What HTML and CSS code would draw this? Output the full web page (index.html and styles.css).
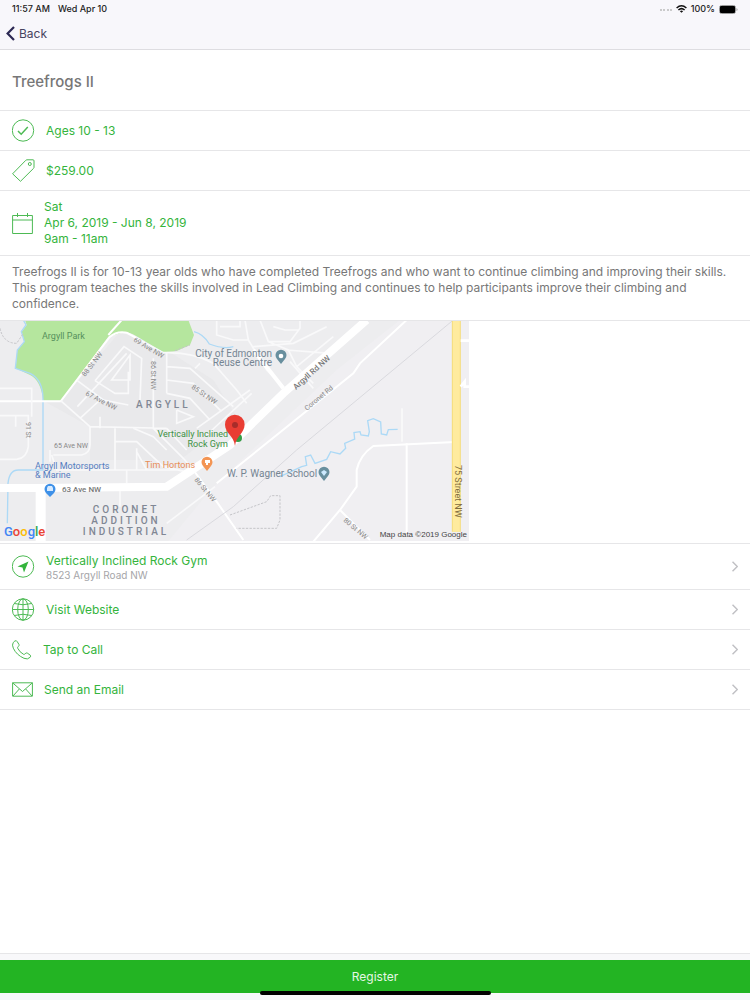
FILE: index.html
```html
<!DOCTYPE html>
<html lang="en">
<head>
    <meta charset="UTF-8">
    <meta name="viewport" content="width=device-width, initial-scale=1.0">
    <title>Treefrogs II</title>
    <link rel="stylesheet" href="styles.css">
</head>
<body>
    <header>
        <div class="status">
            <span>11:57 AM</span>
            <span>Wed Apr 10</span>
            <div class="status-right">
                <svg width="12" height="4" viewBox="0 0 12 4" fill="#bbb"><circle cx="1" cy="3" r="1"/><circle cx="4" cy="3" r="1"/><circle cx="8" cy="3" r="1"/><circle cx="11" cy="3" r="1"/></svg>
                <svg width="11" height="8" viewBox="0 0 11 8" fill="none" stroke="#111" stroke-width="1.5"><path d="M.6 3Q5.500-1.400 10.400 3M2.400 5Q5.500 2.200 8.600 5"/><path d="M5.500 7.800L3.900 6.200Q5.500 5 7.100 6.200Z" fill="#111" stroke="none"/></svg>
                <span>100%</span>
                <svg width="19" height="9" viewBox="0 0 19 9"><rect x=".5" y=".5" width="16" height="8" rx="2" fill="none" stroke="#999"/><rect x="1" y="1" width="15" height="7" rx="1" fill="#000"/><path d="M17.500 3v3q1-.5 1-1.500t-1-1.500z" fill="#999"/></svg>
            </div>
        </div>
        <button class="back" type="button">
            <svg width="9" height="15" viewBox="0 0 9 15" fill="none" stroke="#2c2853" stroke-width="2.200"><path d="M8 1L1.600 7.500L8 14"/></svg>
            Back
        </button>
    </header>

    <main>
        <h1>Treefrogs II</h1>
        <div class="row">
            <svg class="icon" width="23" height="23" viewBox="0 0 23 23"><circle cx="11" cy="11.500" r="10.700"/><path d="M6 12l3.200 3.200L15.800 8" stroke-width="1.500"/></svg>
            <span>Ages 10 - 13</span>
        </div>
        <div class="row">
            <svg class="icon" width="23" height="23" viewBox="0 0 23 23"><path d="M.6 14.800L13.800 1.300Q14.300.8 15 .8h6q1 0 1 1v6.500q0 .6-.5 1.100L8.500 22.300Z"/><circle cx="17.800" cy="5" r="1.500"/></svg>
            <span>$259.00</span>
        </div>
        <div class="row dates">
            <svg class="icon" width="21" height="23" viewBox="0 0 21 23"><path d="M.6 3.500h19.800v18H.6zM.6 8h19.800M5.500 1v4M15.500 1v4"/></svg>
            <span>Sat<br>Apr 6, 2019 - Jun 8, 2019<br>9am - 11am</span>
        </div>
        <p class="description">Treefrogs II is for 10-13 year olds who have completed Treefrogs and who want to continue climbing and improving their skills. This program teaches the skills involved in Lead Climbing and continues to help participants improve their climbing and confidence.</p>

        <div class="map">
            <svg width="469" height="220" viewBox="0 1 469 220">
                <!-- land, water and roads, drawn at three times the map size -->
                <g transform="scale(.33333)" fill="none">
                    <rect width="1410" height="670" fill="#ededef"/>
                    <path d="M500 670L640 500L1010 150L1200 0H1410V670Z" fill="#f0eff2"/>
                    <path d="M130 242L270 320V420H540L710 290L640 180L500 90L360 35L185 240Z" fill="#e9e9eb"/>
                    <path d="M75 0L80 15L65 35L73 65L52 90L47 145L90 165Q122 180 130 242H182L325 50L375 35Q400 40 420 55L490 97L530 93L570 75L582 45L565 0Z" fill="#b5e69e"/>
                    <path d="M70 0L78 15L64 35L73 65L52 90L46 145L90 160Q130 180 129 240V450H55Q28 450 24 490L22 610M582 35Q610 42 628 72Q670 88 700 80M840 470L905 440L920 436L916 410L932 405L945 430L980 418L992 395L1020 402L1037 385L1034 370L1064 357L1062 338L1080 335L1083 345L1105 348L1108 335L1103 302L1120 296L1142 306L1144 342L1160 345L1165 329L1193 328" stroke="#acd9f6" stroke-width="4"/>
                    <g stroke="#f9f9fa" stroke-width="5">
                        <path d="M0 244H182L328 52Q350 32 380 38L420 60M325 45L365 0" stroke="#fff" stroke-width="6"/>
                        <path d="M182 242L270 320L460 324M270 320V375Q270 400 245 405H160M345 325V450M240 295L300 240M232 182L310 240L385 255M232 260L380 100M285 182L345 220H385V155M285 182L372 80L425 115L420 240M335 180L390 105V180ZM420 60L490 98Q580 95 640 130L710 210L740 250M460 115V325H500M500 100V220M500 140L570 145L700 260M500 180L580 190L665 275M500 220L570 235L630 300M530 270V310L580 290L530 270M460 325L550 415L580 450M500 325L560 390M400 325L460 350L500 390M345 365H410L490 440L580 460M155 405L170 450H540M410 385V450M410 395L440 450M380 450V490M0 205H95V240M0 287H85V380Q80 415 50 418H0M47 287V320M95 240V290M150 390V425M300 290V325M585 145L600 130M590 325L750 210M620 345L755 220"/>
                        <path d="M735 0L745 60L800 150L850 200M650 0V45L700 60H745M660 20H720V0M780 0L805 65L865 90L890 140L940 190M805 65H870L900 25V0M820 20L855 30H895M860 90L990 100M890 140L1000 50M760 80L880 70L980 20"/>
                    </g>
                    <path d="M580 450L650 545L730 660M1380 365L1120 378Q1080 405 1070 450L1070 500L1020 570L940 665M1020 570L1110 660M1220 370V650M650 490L930 265L1060 160L1080 130L1220 0" stroke="#fff" stroke-width="6"/>
                    <path d="M1206 265V365M360 505V560M500 610L645 500M870 125L940 205" stroke="#f9f9fa" stroke-width="5"/>
                    <path d="M0 504H110L500 500L690 375L850 220L1100 0" stroke="#fff" stroke-width="24"/>
                    <path d="M122 510V670" stroke="#fff" stroke-width="30"/>
                    <path d="M760 90L850 205" stroke="#fff" stroke-width="12"/>
                    <path d="M690 585L800 545L812 527H840V600L830 625H710M0 25Q10 70 50 70L70 40M525 92L570 75" stroke="#c4c4c8" stroke-width="3" stroke-dasharray="7 4"/>
                    <path d="M560 660L700 560L890 390L1360 0" stroke="#d9d9de" stroke-width="3"/>
                    <path d="M1369 0V635" stroke="#f5dc7d" stroke-width="27"/>
                    <path d="M1369 0V635" stroke="#ffeb9e" stroke-width="21"/>
                    <path d="M1382 62H1410M1382 200L1394 185V200H1410" stroke="#fff" stroke-width="8"/>
                </g>

                <g class="place">
                    <text x="42" y="19" fill="#55905c">Argyll Park</text>
                    <text class="landmark" x="272" y="37" text-anchor="end">City of Edmonton</text>
                    <text class="landmark" x="272" y="46" text-anchor="end">Reuse Centre</text>
                    <text x="228" y="117" text-anchor="end" fill="#3d9144">Vertically Inclined</text>
                    <text x="228" y="127" text-anchor="end" fill="#3d9144">Rock Gym</text>
                    <text x="145" y="148" fill="#e88c55">Tim Hortons</text>
                    <text class="landmark" x="227" y="157">W. P. Wagner School</text>
                    <text x="35" y="149" fill="#547cc0">Argyll Motorsports</text>
                    <text x="35" y="158" fill="#547cc0">&amp; Marine</text>
                </g>
                <g class="area">
                    <text x="136" y="88">ARGYLL</text>
                    <text x="126" y="193" text-anchor="middle">CORONET</text>
                    <text x="126" y="204" text-anchor="middle">ADDITION</text>
                    <text x="126" y="215" text-anchor="middle">INDUSTRIAL</text>
                </g>
                <g class="street">
                    <text transform="translate(85 57) rotate(-52)">88 St NW</text>
                    <text transform="translate(133 21) rotate(31)">69 Ave NW</text>
                    <text transform="translate(151 41) rotate(90)">86 St NW</text>
                    <text transform="translate(191 68) rotate(35)">85 St NW</text>
                    <text transform="translate(85 75) rotate(27)">67 Ave NW</text>
                    <text transform="translate(26 102) rotate(90)">91 St</text>
                    <text x="54" y="128">65 Ave NW</text>
                    <text transform="translate(194 160) rotate(50)">86 St NW</text>
                    <text transform="translate(343 201) rotate(40)">80 St NW</text>
                    <text transform="translate(307 91) rotate(-40)">Coronet Rd</text>
                </g>
                <g class="road">
                    <text x="62" y="172">63 Ave NW</text>
                    <text transform="translate(296 70) rotate(-42)">Argyll Rd NW</text>
                </g>
                <text class="highway" transform="translate(455 145) rotate(90)">75 Street NW</text>

                <!-- small place pins -->
                <g transform="translate(281 36)" fill="#688f9e"><path d="M0 8L-4 3A5.500 5.500 0 1 1 4 3Z"/><circle r="2.300" fill="#fff"/></g>
                <g transform="translate(324 153)" fill="#688f9e"><path d="M0 8L-4 3A5.500 5.500 0 1 1 4 3Z"/><path d="M-3-1L0-3L3-1L0 3Z" fill="#cdeaff"/></g>
                <g transform="translate(207 142)" fill="#f39554"><path d="M0 9L-4 4A5.500 5.500 0 1 1 4 4Z"/><path d="M-2-2H3V1H1V3H-1V1H-2Z" fill="#fff"/></g>
                <g transform="translate(50 169)" fill="#3f91e8"><path d="M0 8L-4 4A5.500 5.500 0 1 1 4 4Z"/><path d="M-3 2V-1L-2-3H2L3-1V2Z" fill="#d6eaff"/></g>
                <circle cx="238" cy="118" r="4" fill="#369c46"/>
                <path d="M235 126C234 116 225 113 225 104.500A9.800 9.800 0 0 1 244.600 104.500C244.600 113 236 116 235 126Z" fill="#e93d33"/>
                <circle cx="235" cy="105" r="3" fill="#a82d2a"/>

                <text class="logo" x="4" y="216"><tspan fill="#4285f4">G</tspan><tspan fill="#ea4335">o</tspan><tspan fill="#fbbc05">o</tspan><tspan fill="#4285f4">g</tspan><tspan fill="#34a853">l</tspan><tspan fill="#ea4335">e</tspan></text>
                <text class="credit" x="467" y="217" text-anchor="end">Map data ©2019 Google</text>
            </svg>
        </div>

        <a class="row link address" href="#map">
            <svg class="icon" width="23" height="23" viewBox="0 0 23 23"><circle cx="11" cy="11.500" r="10.700"/><path d="M5.500 11.500L16.500 6.500L12 17.500L10.500 12.500Z" fill="#34b43c" stroke="none"/></svg>
            <span>Vertically Inclined Rock Gym<small>8523 Argyll Road NW</small></span>
            <svg class="chevron" width="6" height="11" viewBox="0 0 6 11"><path d="M.5.7L5.300 5.500L.5 10.300"/></svg>
        </a>
        <a class="row link" href="#website">
            <svg class="icon" width="23" height="23" viewBox="0 0 23 23"><circle cx="11" cy="11.500" r="10.700"/><ellipse cx="11" cy="11.500" rx="5.300" ry="10.700"/><path d="M11 .8v21.400M.3 11.500h21.400M2.300 5.500Q11 8 19.700 5.500M2.300 17.500Q11 15 19.700 17.500"/></svg>
            <span>Visit Website</span>
            <svg class="chevron" width="6" height="11" viewBox="0 0 6 11"><path d="M.5.7L5.300 5.500L.5 10.300"/></svg>
        </a>
        <a class="row link" href="#call">
            <svg class="icon" width="20" height="20" viewBox="0 0 20 20"><path d="M1.200 2.600Q3 .3 4.300.7Q5 1 7 4.500Q7.400 5.500 6.300 6.500Q5.300 7.300 5.700 8.200Q7.600 12.200 11.500 14.300Q12.400 14.700 13.200 13.700Q14.200 12.500 15.300 13.100L18.300 15.200Q19.200 16 18.100 17.300Q15.700 20 12 18.300Q4.500 15 1.300 8.200Q-.2 4.900 1.200 2.600Z"/></svg>
            <span>Tap to Call</span>
            <svg class="chevron" width="6" height="11" viewBox="0 0 6 11"><path d="M.5.7L5.300 5.500L.5 10.300"/></svg>
        </a>
        <a class="row link" href="#email">
            <svg class="icon" width="21" height="15" viewBox="0 0 21 15"><path d="M.6.8h19.800v13.400H.6zM.6.8L10.500 9.500L20.400.8M1 14L7.300 7M20 14L13.700 7"/></svg>
            <span>Send an Email</span>
            <svg class="chevron" width="6" height="11" viewBox="0 0 6 11"><path d="M.5.7L5.300 5.500L.5 10.300"/></svg>
        </a>
    </main>

    <footer>
        <button class="register" type="button">Register</button>
        <div class="home-bar"></div>
    </footer>
</body>
</html>
```
FILE: styles.css
```css
* {
    box-sizing: border-box;
}
body {
    display: flex;
    flex-direction: column;
    min-height: 100vh;
    margin: 0;
    font-family: Inter, "Liberation Sans", sans-serif;
    font-size: 12px;
    line-height: 16px;
    color: #777;
    background: #fff;
}
button {
    font: inherit;
    border: 0;
    cursor: pointer;
}
svg {
    flex-shrink: 0;
}
header {
    background: #f8f7fb;
    border-bottom: 1px solid #dedde1;
}
.status {
    display: flex;
    align-items: center;
    gap: 8px;
    height: 18px;
    padding: 0 12px;
    font-size: 9px;
    font-weight: 500;
    color: #222;
}
.status-right {
    display: flex;
    align-items: center;
    gap: 4px;
    margin-left: auto;
}
.back {
    display: flex;
    align-items: center;
    gap: 4px;
    height: 31px;
    padding: 0 6px;
    color: #47445f;
    background: none;
}
h1 {
    margin: 0;
    padding: 24px 12px 20px;
    font-size: 15px;
    font-weight: 500;
    color: #777;
    border-bottom: 1px solid #e6e6e8;
}
.row {
    display: flex;
    align-items: center;
    gap: 11px;
    min-height: 40px;
    padding: 0 12px;
    color: #34b43c;
    border-bottom: 1px solid #e6e6e8;
}
.dates {
    padding: 8px 12px;
}
.icon {
    fill: none;
    stroke: #4dba54;
    stroke-width: 1;
}
.description {
    margin: 0;
    padding: 8px 12px;
    border-bottom: 1px solid #e6e6e8;
}
.map {
    padding-bottom: 2px;
    border-bottom: 1px solid #e6e6e8;
}
.map svg {
    display: block;
    max-width: 100%;
}
.link {
    text-decoration: none;
}
.address {
    min-height: 46px;
}
small {
    display: block;
    font-size: 10px;
    line-height: 12px;
    color: #a5a5a8;
}
.chevron {
    margin-left: auto;
    fill: none;
    stroke: #c0c0c4;
    stroke-width: 1.5;
}
.map text {
    font-family: Roboto, sans-serif;
}
.place {
    font-size: 9px;
    fill: #758593;
}
.landmark {
    font-size: 10px;
}
.area {
    font-size: 10px;
    font-weight: 500;
    letter-spacing: 3px;
    fill: #808794;
}
.street {
    font-size: 7px;
    fill: #888;
}
.road {
    font-size: 8px;
    font-weight: 500;
    fill: #777;
}
.highway {
    font-size: 9px;
    fill: #806b3e;
}
.logo {
    font-size: 13px;
    font-weight: 500;
}
.map .credit {
    font-family: "Liberation Sans", sans-serif;
    font-size: 8px;
    fill: #444;
}
footer {
    position: relative;
    margin-top: auto;
    padding: 6px 0 7px;
    background: #f8f8fa;
    border-top: 1px solid #e6e6e8;
}
.register {
    display: block;
    width: 100%;
    height: 33px;
    color: #e5f7e5;
    background: #23b423;
}
.home-bar {
    position: absolute;
    bottom: 5px;
    left: 50%;
    width: 231px;
    height: 4px;
    margin-left: -115px;
    background: #000;
    border-radius: 2px;
}
```
